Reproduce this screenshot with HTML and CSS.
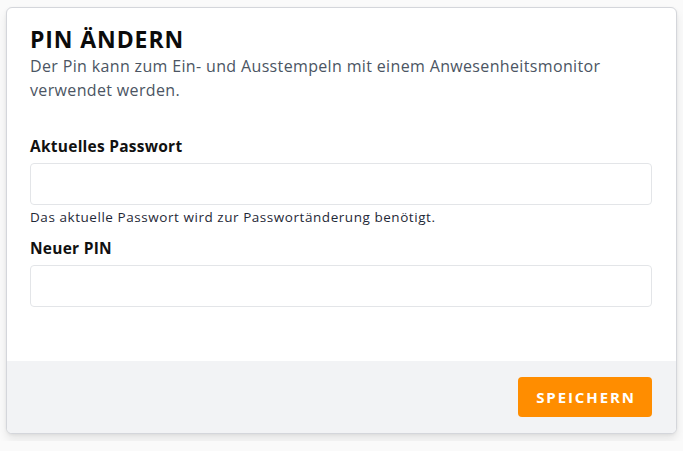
FILE: index.html
```html
<!DOCTYPE html>
<html lang="de">
<head>
<meta charset="utf-8">
<title>PIN ändern</title>
<link rel="stylesheet" href="styles.css">
</head>
<body>
<form class="card">
  <div class="card-body">
    <h2 class="title">PIN ÄNDERN</h2>
    <p class="desc">Der Pin kann zum Ein- und Ausstempeln mit einem Anwesenheitsmonitor verwendet werden.</p>
    <div class="fields">
      <div class="field">
        <label class="label" for="pw">Aktuelles Passwort</label>
        <input class="input" id="pw" type="password">
        <p class="hint">Das aktuelle Passwort wird zur Passwortänderung benötigt.</p>
      </div>
      <div class="field">
        <label class="label" for="pin">Neuer PIN</label>
        <input class="input" id="pin" type="text">
      </div>
    </div>
  </div>
  <div class="card-footer">
    <button class="btn" type="button">SPEICHERN</button>
  </div>
</form>
</body>
</html>
```
FILE: styles.css
```css
* { box-sizing: border-box; }
html, body { margin: 0; }
body {
  background: #fafafa;
  padding: 7px 6px;
  font-family: "Open Sans", "DejaVu Sans", sans-serif;
  color: #111827;
}
.card {
  background: #fff;
  border: 1px solid #d4d6db;
  border-radius: 6px;
  box-shadow: 0 6px 10px rgba(0,0,0,0.08), 0 1px 3px rgba(0,0,0,0.06);
  overflow: hidden;
}
.card-body {
  padding: 16px 24px 54px 23px;
}
.title {
  margin: 0;
  font-size: 23px;
  line-height: 30px;
  font-weight: 700;
  letter-spacing: 0.9px;
  color: #0b0b0b;
}
.desc {
  margin: 0;
  font-size: 16px;
  line-height: 24px;
  letter-spacing: 0.35px;
  color: #4b5563;
}
.fields {
  margin-top: 32px;
  display: flex;
  flex-direction: column;
  gap: 10px;
}
.field { display: flex; flex-direction: column; }
.label {
  font-size: 15.5px;
  line-height: 24px;
  font-weight: 700;
  letter-spacing: 0.25px;
  color: #111;
  margin-bottom: 5px;
}
.input {
  height: 42px;
  border: 1px solid #e3e5e8;
  border-radius: 4px;
  background: #fff;
  width: 100%;
  font: inherit;
}
.hint {
  margin: 3px 0 0;
  font-size: 13.5px;
  line-height: 18px;
  letter-spacing: 0.55px;
  color: #1f2937;
}
.card-footer {
  background: #f2f3f5;
  padding: 16px 24px 16px;
  display: flex;
  justify-content: flex-end;
}
.btn {
  width: 134px;
  height: 40px;
  border: none;
  border-radius: 4px;
  background: #ff8d00;
  color: #fff;
  font-family: inherit;
  font-size: 15px;
  font-weight: 700;
  letter-spacing: 1.9px;
  padding: 0 0 0 2px;
}
```
